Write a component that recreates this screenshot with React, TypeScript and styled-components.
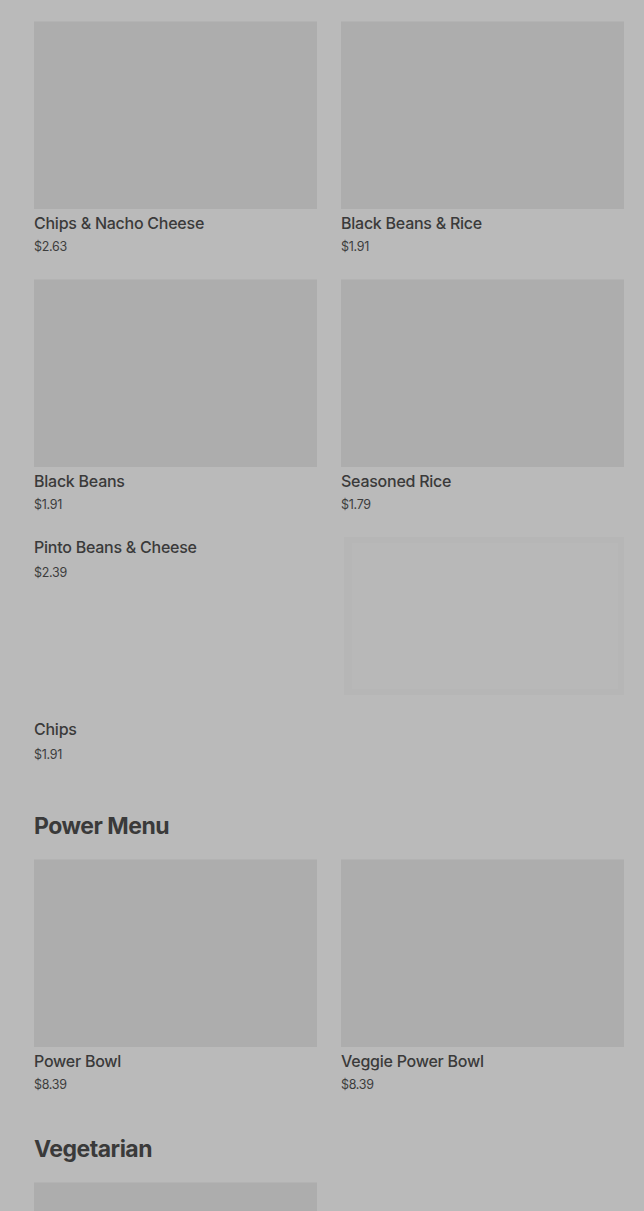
import { createGlobalStyle, styled } from 'styled-components';

interface Item {
  name: string;
  price: string;
  image?: 'full' | 'none' | 'loading';
}

interface Section {
  title: string;
  items: Item[];
}

const sections: Section[] = [
  {
    title: 'Sides',
    items: [
      { name: 'Chips & Nacho Cheese', price: '$2.63', image: 'full' },
      { name: 'Black Beans & Rice', price: '$1.91', image: 'full' },
      { name: 'Black Beans', price: '$1.91', image: 'full' },
      { name: 'Seasoned Rice', price: '$1.79', image: 'full' },
      { name: 'Pinto Beans & Cheese', price: '$2.39', image: 'none' },
      { name: '', price: '', image: 'loading' },
      { name: 'Chips', price: '$1.91', image: 'none' },
    ],
  },
  {
    title: 'Power Menu',
    items: [
      { name: 'Power Bowl', price: '$8.39', image: 'full' },
      { name: 'Veggie Power Bowl', price: '$8.39', image: 'full' },
    ],
  },
  {
    title: 'Vegetarian',
    items: [{ name: '', price: '', image: 'full' }],
  },
];

const MenuCard = ({ item }: { item: Item }) => {
  if (item.image === 'loading') {
    return <LoadingBox />;
  }
  const textOnly = item.image === 'none';
  return (
    <Card textOnly={textOnly}>
      {item.image === 'full' && <Thumb />}
      {item.name && <Name>{item.name}</Name>}
      {item.price && <Price textOnly={textOnly}>{item.price}</Price>}
    </Card>
  );
};

const App = () => {
  return (
    <>
      <GlobalStyle />
      <Page>
        {sections.map((section) => (
          <Block key={section.title}>
            <Heading>{section.title}</Heading>
            <Grid>
              {section.items.map((item, idx) => (
                <MenuCard key={idx} item={item} />
              ))}
            </Grid>
          </Block>
        ))}
      </Page>
    </>
  );
};

export default App;

const GlobalStyle = createGlobalStyle`
  html, body {
    margin: 0;
    padding: 0;
    background: #bababa;
    overflow: hidden;
  }
  body {
    font-family: Inter, "Liberation Sans", sans-serif;
    color: #3a3a3a;
  }
`;

const Page = styled.div`
  width: 644px;
  height: 1211px;
  overflow: hidden;
  box-sizing: border-box;
  padding: 0 20px 0 34px;
  display: flex;
  flex-direction: column;
  gap: 41px;
`;

const Block = styled.section`
  flex-shrink: 0;
  display: flex;
  flex-direction: column;
  &:first-child {
    margin-top: -27px;
  }
`;

const Heading = styled.h2`
  margin: 0 0 18px;
  font-size: 23px;
  line-height: 30px;
  font-weight: 700;
  letter-spacing: -0.5px;
  color: #3a3a3a;
`;

const Grid = styled.div`
  display: grid;
  grid-template-columns: 283px 283px;
  column-gap: 24px;
  row-gap: 24px;
`;

const Card = styled.div<{ textOnly?: boolean }>`
  display: flex;
  flex-direction: column;
  min-height: ${(p) => (p.textOnly ? '52px' : 'auto')};
  margin-top: ${(p) => (p.textOnly ? '-1px' : '0')};
`;

const Thumb = styled.div`
  height: 188px;
  background: #adadad;
  border-top: 1px solid #b3b3b3;
  box-sizing: border-box;
  margin-bottom: 3px;
`;

const Name = styled.div`
  font-size: 16px;
  line-height: 22px;
  font-weight: 500;
  letter-spacing: -0.25px;
  color: #3a3a3a;
`;

const Price = styled.div<{ textOnly?: boolean }>`
  margin-top: ${(p) => (p.textOnly ? '7px' : '5px')};
  font-size: 12.5px;
  line-height: 16px;
  color: #3d3d3d;
  letter-spacing: -0.3px;
`;

const LoadingBox = styled.div`
  height: 158px;
  margin-left: 3px;
  box-sizing: border-box;
  background: #b8b8b8;
  border: 6px solid #b6b6b6;
  border-left-width: 8px;
`;
